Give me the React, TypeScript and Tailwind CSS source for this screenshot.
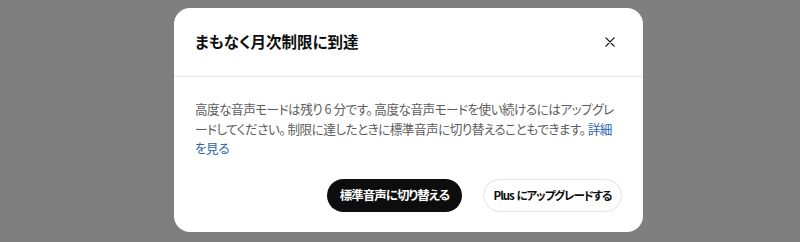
import React from 'react';

const CloseIcon: React.FC<{ className?: string }> = ({ className }) => (
  <svg viewBox="0 0 24 24" className={className} fill="none" stroke="currentColor" strokeWidth={2.2} strokeLinecap="round">
    <path d="M5 5 L19 19 M19 5 L5 19" />
  </svg>
);

export default function App() {
  return (
    <div
      className="w-[800px] h-[242px] bg-[#7f7f7f] pl-[174px] pt-[8px] overflow-hidden [font-feature-settings:'palt']"
      style={{ fontFamily: '"Noto Sans CJK JP", "Noto Sans", sans-serif' }}
    >
      <div className="w-[469px] h-[224px] bg-white rounded-[16px] flex flex-col">
        {/* ヘッダー */}
        <div className="h-[69px] flex items-center justify-between pl-[21px] pr-[26px] border-b border-[#e5e5e5]">
          <h2 className="text-[15.5px] font-semibold text-[#0d0d0d]">まもなく月次制限に到達</h2>
          <button className="text-[#0d0d0d]" aria-label="閉じる">
            <CloseIcon className="w-[14px] h-[14px]" />
          </button>
        </div>

        {/* 本文 */}
        <div className="px-[21px] pt-[22px] flex-1 flex flex-col">
          <p className="text-[12.6px] leading-[19.5px] tracking-[-0.5px] text-[#5d5d5d] whitespace-nowrap">
            高度な音声モードは残り 6 分です。 高度な音声モードを使い続けるにはアップグレ
            <br />
            ードしてください。 制限に達したときに標準音声に切り替えることもできます。 <a className="text-[#2964aa]">詳細</a>
            <br />
            <a className="text-[#2964aa]">を見る</a>
          </p>

          <div className="mt-auto mb-[20px] flex justify-end gap-[21px]">
            <button className="h-[33px] w-[135px] rounded-full bg-[#0d0d0d] text-white text-[12.5px] tracking-[-1px] font-semibold whitespace-nowrap">
              標準音声に切り替える
            </button>
            <button className="h-[33px] w-[139px] rounded-full bg-white border border-[#e3e3e3] text-[#0d0d0d] text-[11.5px] tracking-[-1.1px] font-semibold whitespace-nowrap">
              <span className="mr-[3px]">Plus</span>にアップグレードする
            </button>
          </div>
        </div>
      </div>
    </div>
  );
}
